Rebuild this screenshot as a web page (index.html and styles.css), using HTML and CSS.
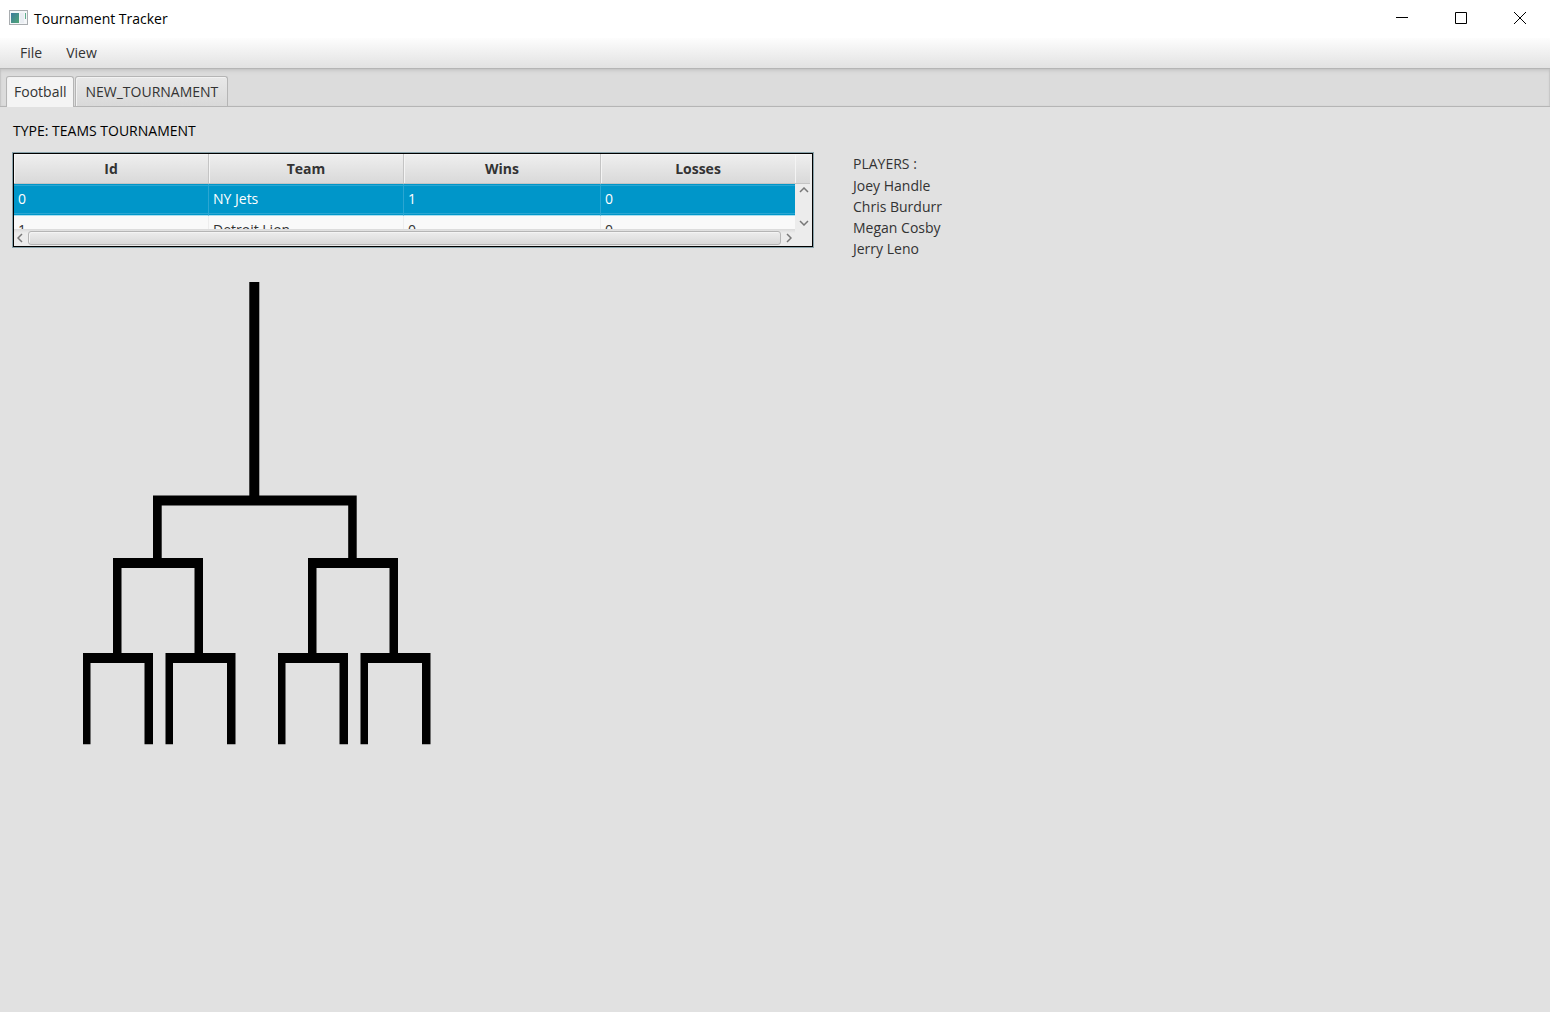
FILE: index.html
```html
<!DOCTYPE html>
<html lang="en">
<head>
<meta charset="utf-8">
<title>Tournament Tracker</title>
<link rel="stylesheet" href="styles.css">
</head>
<body>
<header class="titlebar">
  <svg class="app-icon" width="20" height="16" viewBox="0 0 20 16" aria-hidden="true">
    <defs><linearGradient id="pane" x1="0" y1="0" x2="1" y2="1"><stop offset="0" stop-color="#3c7a9c"/><stop offset="1" stop-color="#4fa676"/></linearGradient></defs>
    <rect x="0.500" y="0.500" width="18" height="14" fill="#f4f6f8" stroke="#a9adb0"/>
    <rect x="2" y="3" width="8" height="10" fill="url(#pane)"/>
    <rect x="11" y="3" width="4" height="10" fill="#e9edf2"/>
    <rect x="16" y="3" width="1" height="6" fill="#5fae8c"/>
  </svg>
  <h1 class="title">Tournament Tracker</h1>
  <div class="window-buttons">
    <button class="window-button" aria-label="Minimize"><svg width="12" height="12" viewBox="0 0 12 12"><path d="M0 5.500H12"/></svg></button>
    <button class="window-button" aria-label="Maximize"><svg width="12" height="12" viewBox="0 0 12 12"><path d="M0.500 0.500H11.500V11.500H0.500Z"/></svg></button>
    <button class="window-button" aria-label="Close"><svg width="12" height="12" viewBox="0 0 12 12"><path d="M0 0L12 12M12 0L0 12"/></svg></button>
  </div>
</header>
<nav class="menubar">
  <button class="menu">File</button>
  <button class="menu">View</button>
</nav>
<div class="tabs" role="tablist">
  <button class="tab selected" role="tab" aria-selected="true">Football</button>
  <button class="tab" role="tab" aria-selected="false">NEW_TOURNAMENT</button>
</div>
<main class="content">
  <p class="type">TYPE: TEAMS TOURNAMENT</p>
  <div class="standings">
    <div class="table-view">
      <div class="viewport">
        <table class="teams">
          <colgroup><col class="col"><col class="col"><col class="col-wide"><col class="col"></colgroup>
          <thead><tr><th>Id</th><th>Team</th><th>Wins</th><th>Losses</th></tr></thead>
          <tbody>
            <tr class="active"><td>0</td><td>NY Jets</td><td>1</td><td>0</td></tr>
            <tr><td>1</td><td>Detroit Lion</td><td>0</td><td>0</td></tr>
          </tbody>
        </table>
      </div>
      <div class="side">
        <div class="filler"></div>
        <div class="vscroll">
          <button class="arrow" aria-label="Scroll up"><svg width="10" height="6" viewBox="0 0 10 6"><path d="M1 5L5 1L9 5"/></svg></button>
          <button class="arrow" aria-label="Scroll down"><svg width="10" height="6" viewBox="0 0 10 6"><path d="M1 1L5 5L9 1"/></svg></button>
        </div>
      </div>
      <div class="hscroll">
        <button class="arrow" aria-label="Scroll left"><svg width="6" height="10" viewBox="0 0 6 10"><path d="M5 1L1 5L5 9"/></svg></button>
        <div class="thumb"></div>
        <button class="arrow" aria-label="Scroll right"><svg width="6" height="10" viewBox="0 0 6 10"><path d="M1 1L5 5L1 9"/></svg></button>
      </div>
    </div>
    <section class="players">
      <h2 class="players-title">PLAYERS :</h2>
      <ul class="player-list">
        <li>Joey Handle</li>
        <li>Chris Burdurr</li>
        <li>Megan Cosby</li>
        <li>Jerry Leno</li>
      </ul>
    </section>
  </div>
  <svg class="bracket" width="348" height="463" viewBox="83 282 348 463" role="img" aria-label="Tournament bracket">
    <path d="M249.300 281.700H259.300V495.500H356.700V558H398V653H430.500V744.200H422V663H368V744.200H360.500V653H389.500V568H316.500V653H348V744.200H339.500V663H285.500V744.200H278V653H308V558H348.200V505.500H161.700V558H203V653H235.500V744.200H227V663H173V744.200H165.500V653H194.500V568H121.500V653H153V744.200H144.500V663H90.500V744.200H83V653H113V558H153V495.500H249.300Z"/>
  </svg>
</main>
</body>
</html>
```
FILE: styles.css
```css
* { box-sizing: border-box; }
body {
  margin: 0;
  min-height: 100vh;
  display: flex;
  flex-direction: column;
  background: #e1e1e1;
  color: #333;
  font: 14px/21px "Open Sans", "Noto Sans", sans-serif;
}
h1, h2, p, ul { margin: 0; padding: 0; font-size: inherit; font-weight: 400; }
button { font: inherit; color: inherit; border: 0; padding: 0; background: none; }
svg { display: block; }

.titlebar { display: flex; align-items: center; height: 38px; padding: 0 1px 2px 9px; background: #fff; color: #000; }
.title { margin-left: 5px; }
.window-buttons { display: flex; margin-left: auto; height: 36px; }
.window-button { width: 59px; display: grid; place-items: center; }
.window-button path { fill: none; stroke: #000; }

.menubar { display: flex; height: 31px; padding: 0 8px; background: linear-gradient(#fdfdfd, #e2e2e2); border-bottom: 1px solid #b5b5b5; }
.menu { padding: 0 12px 2px; }

.tabs {
  display: flex;
  align-items: flex-end;
  gap: 1px;
  height: 38px;
  padding: 0 6px;
  background: #dcdcdc;
  border-bottom: 1px solid #b5b5b5;
  box-shadow: inset 0 3px 4px -2px #bdbdbd, inset 1px 0 1px #c8c8c8, inset -1px 0 1px #c8c8c8;
}
.tab { height: 30px; padding: 0 9px; border: 1px solid #b5b5b5; border-bottom: 0; border-radius: 3px 3px 0 0; background: linear-gradient(#e8e8e8, #d9d9d9); box-shadow: inset 1px 1px #f2f2f2; }
.tab.selected { height: 31px; margin-bottom: -1px; padding: 0 7px 1px; background: #f4f4f4; }

.content { padding: 13px 12px; }
.type { color: #000; padding-left: 1px; }
.standings { display: flex; gap: 39px; margin-top: 11px; }
.table-view {
  flex: 0 1 802px;
  display: grid;
  grid-template-columns: 1fr 17px;
  grid-template-rows: 75px 17px;
  align-self: flex-start;
  border: 1px solid #8aa3ab;
  outline: 1px solid #000;
  outline-offset: -2px;
  padding: 1px;
  background: #ececec;
}
.viewport { overflow: hidden; background: #f9f9f9; }
.teams { width: 100%; table-layout: fixed; border-collapse: separate; border-spacing: 0; }
.col { width: 195px; }
.col-wide { width: 197px; }
th { height: 30px; padding: 0; font-weight: 700; background: linear-gradient(#efefef, #d9d9d9); border-right: 1px solid #c4c4c4; border-bottom: 1px solid #c4c4c4; box-shadow: inset 1px 1px #f4f4f4; }
td { height: 32px; padding: 0 4px 6px; border-right: 1px solid #ededed; }
.active td { padding-bottom: 2px; color: #fff; background: #0096c9; border-right-color: #2ba6d2; border-bottom: 1px solid #a9dff0; box-shadow: inset 0 1px #0096c9, inset 0 2px #2ba6d2, inset 0 -1px #0096c9, inset 0 -2px #2ba6d2; }
.side { display: flex; flex-direction: column; }
.filler { height: 30px; margin-right: 2px; background: linear-gradient(#efefef, #d9d9d9); border-bottom: 1px solid #c4c4c4; box-shadow: inset 1px 1px #f4f4f4; }
.vscroll { flex: 1; display: flex; flex-direction: column; justify-content: space-between; align-items: center; padding: 3px 0; }
.hscroll { display: flex; align-items: center; gap: 5px; padding: 1px 3px 0; background: linear-gradient(#dadada, #ececec 4px); }
.thumb { flex: 1; height: 14px; border: 1px solid #b5b5b5; border-radius: 3px; background: linear-gradient(#ededed, #d9d9d9); box-shadow: inset 1px 1px #f4f4f4; }
.arrow path { fill: none; stroke: #777; stroke-width: 1.500; }

.players { padding-top: 1px; }
.players-title { line-height: 22px; }
.player-list { list-style: none; }

.bracket { margin: 23px 0 0 71px; }
.bracket path { fill: #000; }
```
